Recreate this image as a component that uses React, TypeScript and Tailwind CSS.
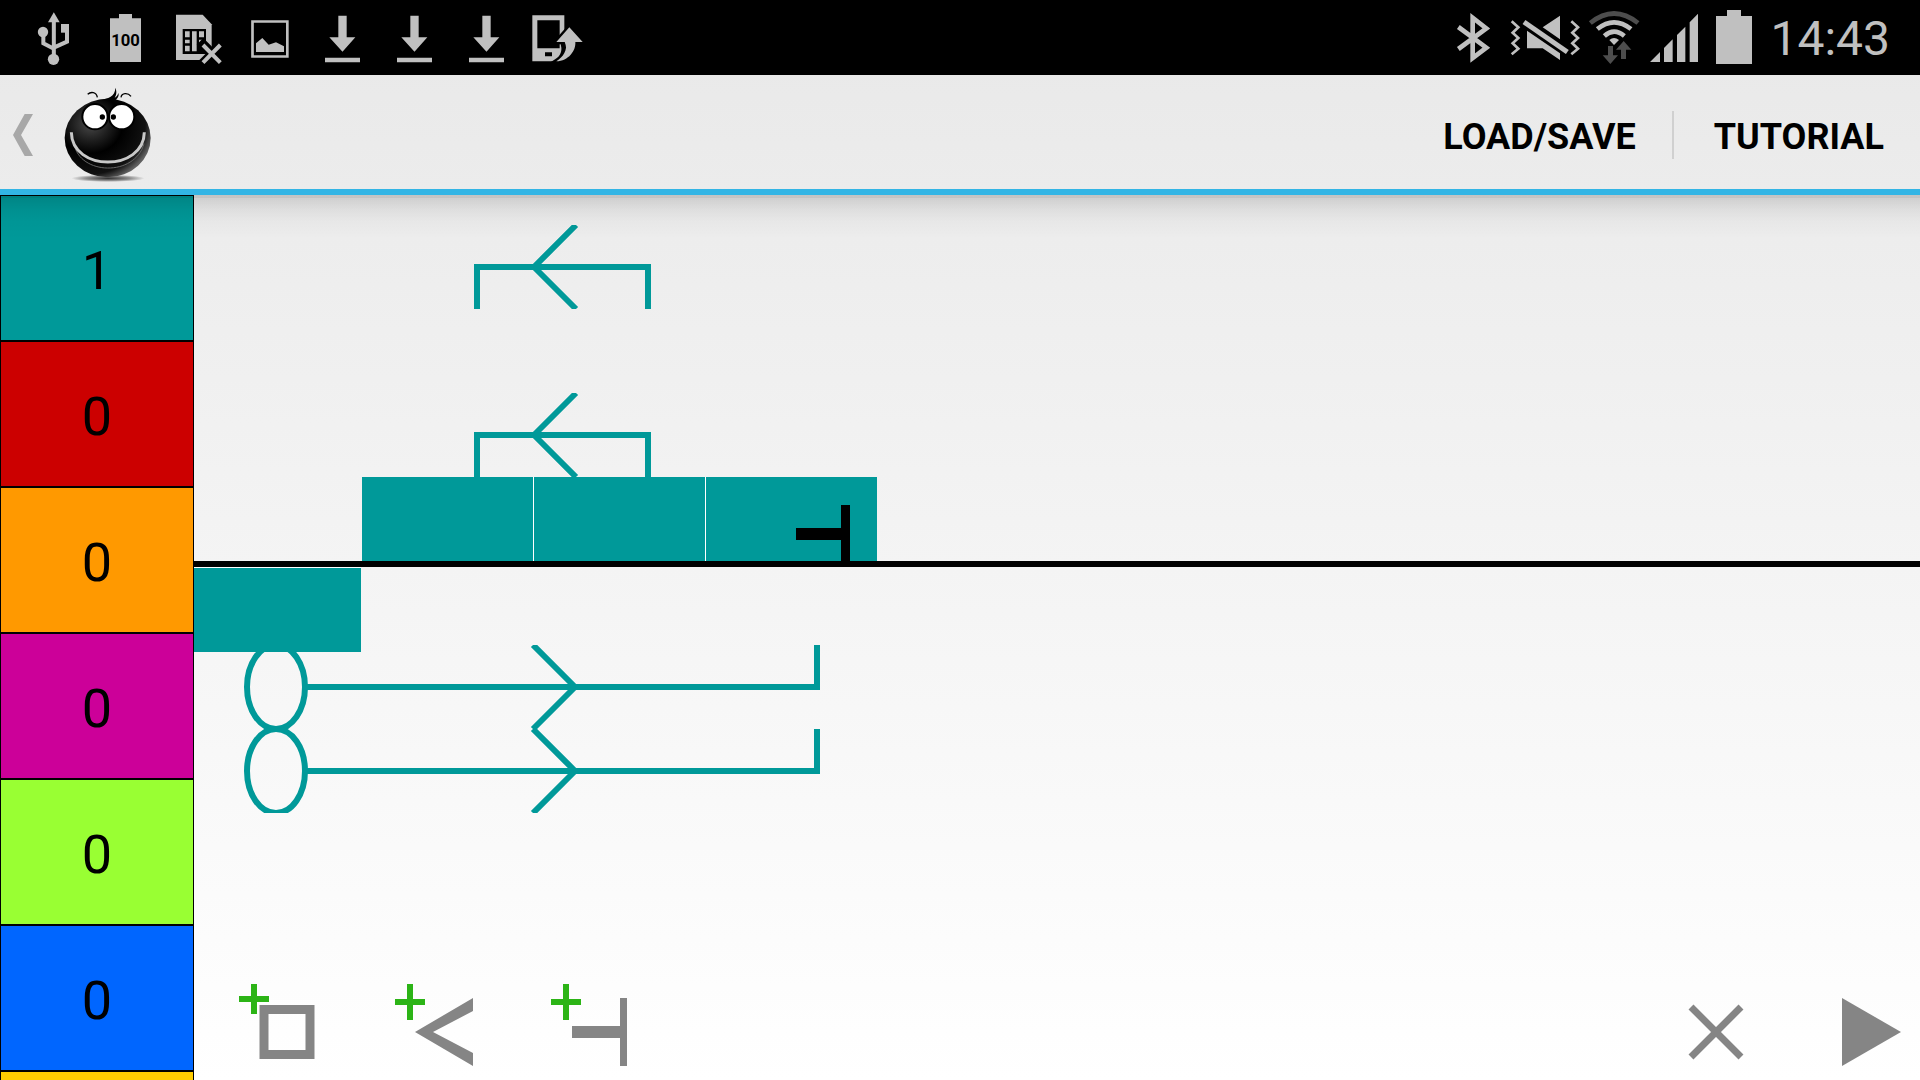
import React from "react";

const GREY = "#c0c0c0";
const DIM = "#4d4d4d";
const TEAL = "#009999";

function StatusIcon({ box, className, children }: { box: string; className: string; children: React.ReactNode }) {
  return (
    <svg viewBox={box} className={`h-[75px] shrink-0 ${className}`} fill={GREY} aria-hidden="true">
      {children}
    </svg>
  );
}

function DownloadIcon() {
  return (
    <StatusIcon box="18 0 216 225" className="w-[72px]">
      <path d="M115 47H140V112H166L127.500 155L88 112H115ZM75 173H180V187H75Z" />
    </StatusIcon>
  );
}

function StatusBar() {
  return (
    <header className="flex h-[75px] shrink-0 items-center justify-between bg-black pl-[18px] pr-[30px]">
      <div className="flex">
        <StatusIcon box="54 0 216 225" className="w-[72px]">
          <path d="M161.500 37L179 67H144Z" />
          <circle cx="129" cy="96" r="15.500" />
          <circle cx="160.500" cy="178" r="17" />
          <path d="M183 72H207V98H183Z" />
          <path d="M161.500 60V175M130 96V130L161.500 146M201 96V125L161.500 143" fill="none" stroke={GREY} strokeWidth="12" />
        </StatusIcon>
        <StatusIcon box="270 0 216 225" className="w-[72px]">
          <path d="M330 55H357V42H396V55H423V186H330Z" />
          <text x="376.500" y="138" textAnchor="middle" fill="#000" fontSize="50" fontWeight="700" fontFamily="Roboto, sans-serif">
            100
          </text>
        </StatusIcon>
        <StatusIcon box="486 0 216 225" className="w-[72px]">
          <path d="M528 44H608L635 73V180H528Z" />
          <path d="M548 87H618V162H548Z" fill="#000" />
          <path d="M555 94H569V112H555ZM555 119H569V130H555ZM555 137H569V154H555ZM576 94H590V154H576ZM597 94H612V112H597ZM597 119H612V130H597Z" />
          <path d="M600 124L670 194M670 128L588 210" stroke="#000" strokeWidth="28" />
          <path d="M609 135L661 188M661 135L609 188" stroke={GREY} strokeWidth="12" />
        </StatusIcon>
        <StatusIcon box="702 0 216 225" className="w-[72px]">
          <path d="M757.500 64.500H862V169.500H757.500Z" fill="none" stroke={GREY} strokeWidth="8" />
          <path d="M768 130L787 114L806 134L828 127L852 139V156H768Z" />
        </StatusIcon>
        <DownloadIcon />
        <DownloadIcon />
        <DownloadIcon />
        <StatusIcon box="666 0 216 225" className="w-[72px]">
          <path fillRule="evenodd" d="M697 46H793V184H697ZM712 61V145H779V61ZM735 157V169H756V157Z" />
          <path d="M808 82L848 126H826C828 152 806 183 769 184C790 171 796 150 787 126H769Z" stroke="#000" strokeWidth="14" />
          <path d="M808 82L848 126H826C828 152 806 183 769 184C790 171 803 150 797 126H769Z" />
        </StatusIcon>
      </div>
      <div className="flex items-center">
        <StatusIcon box="48 0 108 225" className="mr-4 w-9">
          <path d="M55 81L139 143L98 174V53L139 85L55 147" fill="none" stroke={GREY} strokeWidth="14" />
        </StatusIcon>
        <StatusIcon box="204 0 222 225" className="mr-1.5 w-[74px]">
          <path
            d="M215 64L235 82L218 98L235 114L218 130L235 146L215 163M394 64L414 82L397 98L414 114L397 130L414 146L394 163"
            fill="none"
            stroke={GREY}
            strokeWidth="8"
          />
          <path d="M261 92L360 160V180L308 145H261ZM308 82L360 47V118Z" />
          <path d="M252 66L382 156" stroke={GREY} strokeWidth="15" />
        </StatusIcon>
        <StatusIcon box="444 0 156 225" className="mr-2.5 w-[52px]">
          <g fill="none" strokeWidth="14">
            <path d="M451 69Q522 12 594 69" stroke={DIM} />
            <path d="M472 87Q522 47 573 87" stroke={GREY} />
            <path d="M493 108Q522 82 553 108" stroke={GREY} />
          </g>
          <path d="M508 120Q522 108 537 120L522 135Z" />
          <path d="M551 123L574 149H558V177H543V149H528ZM504 138H519V166H534L511 192L488 166H504Z" fill={DIM} />
        </StatusIcon>
        <StatusIcon box="30 0 147 225" className="mr-[17px] w-[49px]">
          <path d="M30 186L60 156V186ZM72 186V144L98 118V186ZM111 186V105L136 80V186ZM149 186V67L174 41V186Z" />
        </StatusIcon>
        <StatusIcon box="228 0 108 225" className="mr-[18px] w-9">
          <path d="M228 48H261V30H303V48H336V192H228Z" />
        </StatusIcon>
        <time className="pt-0.5 text-[48px] leading-[72px] text-[#c0c0c0]">14:43</time>
      </div>
    </header>
  );
}

function Mascot() {
  return (
    <svg viewBox="190 250 270 300" className="h-[100px] w-[90px]" aria-hidden="true">
      <defs>
        <radialGradient id="ball" cx="0.3" cy="0.32" r="0.75">
          <stop offset="0" stopColor="#4a4a4a" />
          <stop offset="0.3" stopColor="#1c1c1c" />
          <stop offset="0.5" stopColor="#000" />
          <stop offset="0.85" stopColor="#111" />
          <stop offset="1" stopColor="#606060" />
        </radialGradient>
        <radialGradient id="ground">
          <stop offset="0" stopColor="#000" stopOpacity="0.8" />
          <stop offset="0.6" stopColor="#000" stopOpacity="0.4" />
          <stop offset="1" stopColor="#000" stopOpacity="0" />
        </radialGradient>
      </defs>
      <ellipse cx="325" cy="536" rx="110" ry="11" fill="url(#ground)" />
      <ellipse cx="324" cy="415" rx="129" ry="118" fill="url(#ball)" />
      <path d="M300 300C325 298 347 290 347 264C353 278 349 288 345 294C350 292 354 288 356 280C359 288 354 296 348 301Z" />
      <path d="M264 284C274 275 290 277 293 293M364 293C366 280 384 278 394 290" fill="none" stroke="#000" strokeWidth="4" />
      <circle cx="286" cy="351" r="38" fill="#fff" stroke="#000" strokeWidth="6" />
      <circle cx="366" cy="351" r="38" fill="#fff" stroke="#000" strokeWidth="6" />
      <circle cx="308" cy="352" r="8" />
      <circle cx="341" cy="352" r="8" />
      <path d="M223 432C239 527 406 532 433 432" fill="none" stroke="#666" strokeWidth="3" />
      <path d="M215 398C217 517 432 517 434 398" fill="none" stroke="#c8c8c8" strokeWidth="9" />
    </svg>
  );
}

function ActionBar() {
  return (
    <nav className="flex h-[120px] shrink-0 items-center justify-between border-b-6 border-[#33b5e5] pt-0.5">
      <button type="button" aria-label="Navigate up" className="flex items-center gap-[30px] pl-[13px]">
        <svg viewBox="0 0 60 126" className="mt-1 h-[42px] w-5" aria-hidden="true">
          <path d="M35 0H60L24 63L60 126H35L0 63Z" fill="#a8a8a8" />
        </svg>
        <Mascot />
      </button>
      <div className="mt-1 flex items-center text-[36px] font-bold leading-[48px] text-black">
        <button type="button" className="px-9 pt-1">LOAD/SAVE</button>
        <span className="h-12 w-0.5 bg-[#d0d0d0]" />
        <button type="button" className="pl-10 pr-9 pt-1">TUTORIAL</button>
      </div>
    </nav>
  );
}

const swatches = [
  { name: "Teal", count: 1, color: "bg-[#009999]" },
  { name: "Red", count: 0, color: "bg-[#cc0000]" },
  { name: "Orange", count: 0, color: "bg-[#ff9900]" },
  { name: "Magenta", count: 0, color: "bg-[#cc0099]" },
  { name: "Lime", count: 0, color: "bg-[#99ff33]" },
  { name: "Blue", count: 0, color: "bg-[#0066ff]" },
  { name: "Yellow", count: null, color: "bg-[#ffcc00]" },
];

function Palette() {
  return (
    <aside className="flex w-[194px] shrink-0 flex-col overflow-hidden">
      {swatches.map((s) => (
        <button
          key={s.name}
          type="button"
          aria-label={s.name}
          className={`h-[146px] w-full shrink-0 border border-black pt-1.5 text-[54px] leading-none text-black ${s.color}`}
        >
          {s.count}
        </button>
      ))}
    </aside>
  );
}

function UpperLink({ y }: { y: number }) {
  return (
    <g transform={`translate(0 ${y})`}>
      <path d="M283 84V42H454V84" />
      <path d="M382 0L340 42M340 42L382 84" />
    </g>
  );
}

function LowerLink({ y }: { y: number }) {
  return (
    <g transform={`translate(0 ${y})`}>
      <ellipse cx="82" cy="42" rx="29" ry="42" />
      <path d="M111 42H623V0" />
      <path d="M339 0L381 42M381 42L339 84" />
    </g>
  );
}

function Diagram() {
  return (
    <svg className="block min-h-0 w-full flex-1" role="img" aria-label="Sequence diagram">
      <defs>
        <clipPath id="upper">
          <path d="M0 30H900V114H0ZM0 198H900V282H0Z" />
        </clipPath>
        <clipPath id="lower">
          <path d="M0 450H900V618H0Z" />
        </clipPath>
      </defs>
      <g fill="none" stroke={TEAL} strokeWidth="6">
        <g clipPath="url(#upper)">
          <UpperLink y={30} />
          <UpperLink y={198} />
        </g>
        <g clipPath="url(#lower)">
          <LowerLink y={450} />
          <LowerLink y={534} />
        </g>
      </g>
      <rect x="168" y="282" width="515" height="84" fill="#fff" />
      <g fill={TEAL}>
        <rect x="168" y="282" width="171" height="84" />
        <rect x="340" y="282" width="171" height="84" />
        <rect x="512" y="282" width="171" height="84" />
      </g>
      <rect x="0" y="372" width="167" height="1" fill="#fff" />
      <rect x="0" y="373" width="167" height="84" fill={TEAL} />
      <path d="M602 333H647V310H656V366H647V345H602Z" />
      <rect x="0" y="366" width="100%" height="6" />
    </svg>
  );
}

function Tool({ label, children }: { label: string; children: React.ReactNode }) {
  return (
    <button type="button" aria-label={label} className="size-[84px]">
      <svg viewBox="0 0 84 84" className="size-full" fill="#858585" aria-hidden="true">
        {children}
      </svg>
    </button>
  );
}

function Toolbar() {
  return (
    <div className="flex shrink-0 justify-between pb-3 pl-[45px] pr-3">
      <div className="flex gap-[72px]">
        <Tool label="Add block">
          <path d="M0 12H12V0H18V12H30V18H18V30H12V18H0Z" fill="#2cb416" />
          <rect x="25" y="25.500" width="46" height="45" fill="none" stroke="#858585" strokeWidth="9" />
        </Tool>
        <Tool label="Add link">
          <path d="M0 15H12V0H18V15H30V21H18V36H12V21H0Z" fill="#2cb416" />
          <path d="M78 14V27L38 48L78 69V82L20 48Z" />
        </Tool>
        <Tool label="Add terminator">
          <path d="M0 15H12V0H18V15H30V21H18V36H12V21H0Z" fill="#2cb416" />
          <path d="M21 42H69V14H76V82H69V54H21Z" />
        </Tool>
      </div>
      <div className="flex gap-[72px]">
        <Tool label="Delete">
          <path d="M23 23L73 73M73 23L23 73" stroke="#858585" strokeWidth="7" />
        </Tool>
        <Tool label="Play">
          <path d="M18 14L77 48L18 82Z" />
        </Tool>
      </div>
    </div>
  );
}

export default function App() {
  return (
    <div className="flex h-screen flex-col overflow-hidden bg-linear-to-b from-[#e8e8e8] to-white font-[Roboto,sans-serif]">
      <StatusBar />
      <ActionBar />
      <div className="relative flex min-h-0 flex-1">
        <Palette />
        <main className="flex min-w-0 flex-1 flex-col">
          <Diagram />
          <Toolbar />
        </main>
        <div className="pointer-events-none absolute inset-x-0 top-0 h-11 bg-[linear-gradient(to_bottom,rgba(0,0,0,0.17)_0px,rgba(0,0,0,0.17)_3px,rgba(0,0,0,0.12)_3px,rgba(0,0,0,0.06)_15px,rgba(0,0,0,0.025)_26px,transparent_44px)]" />
      </div>
    </div>
  );
}
